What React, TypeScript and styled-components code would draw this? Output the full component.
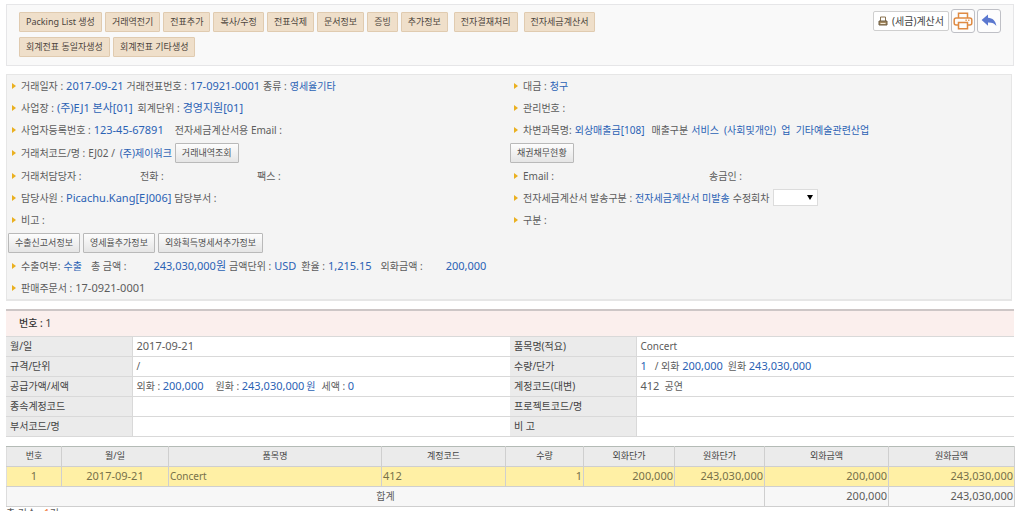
import React from "react";
import styled, { createGlobalStyle } from "styled-components";

const GlobalStyle = createGlobalStyle`
  * { box-sizing: border-box; }
  html, body { margin: 0; background: #fff; }
  body, button, select, input {
    font-family: "Noto Sans", "Noto Sans CJK KR", sans-serif;
    font-size: 10px;
    color: #5c5c5c;
  }
`;

const Page = styled.main`
  padding: 4px 9px 0 6px;
  height: 100vh;
  overflow: hidden;
`;

const Toolbar = styled.header`
  display: flex;
  justify-content: space-between;
  align-items: flex-start;
  gap: 24px;
  padding: 7px 12px 8px;
  background: #f9f9f9;
  border: 1px solid #e6e6e8;
`;

const Actions = styled.div`
  display: flex;
  flex-direction: column;
  gap: 5px;
`;

const ActionLine = styled.div`
  display: flex;
  flex-wrap: wrap;
  gap: 3px;
`;

const ActionButton = styled.button<{ $apart?: boolean }>`
  height: 20px;
  padding: 0 6px;
  margin-left: ${(p) => (p.$apart ? 3 : 0)}px;
  border: 1px solid #e0cbb0;
  border-radius: 1px;
  background: #efdfca;
  color: #4c443c;
  font-size: 9px;
  line-height: 16px;
  white-space: nowrap;
`;

const Tools = styled.div`
  display: flex;
  align-items: center;
  gap: 2px;
  margin-top: -3px;
`;

const InvoiceButton = styled.button`
  display: flex;
  align-items: center;
  gap: 4px;
  height: 20px;
  padding: 0 4px;
  border: 1px solid #cfcfcf;
  border-radius: 2px;
  background: #fff;
  color: #444;
  line-height: 16px;
  white-space: nowrap;
`;

const IconButton = styled.button`
  display: grid;
  place-items: center;
  width: 24px;
  height: 24px;
  padding: 0;
  border: 1px solid #bfc0c6;
  border-radius: 3px;
  background: #fdfdfd;
`;

const Info = styled.section`
  margin: 8px 2px 0 0;
  background: #f4f4f4;
  border: 1px solid #e6e6e6;
  border-bottom-width: 2px;
`;

const InfoRow = styled.div<{ $tall?: boolean }>`
  display: grid;
  grid-template-columns: 1fr 1fr;
  height: ${(p) => (p.$tall ? 24 : 22)}px;
`;

const Cell = styled.div<{ $buttons?: boolean }>`
  display: flex;
  align-items: center;
  gap: 3px;
  padding: 0 0 1px ${(p) => (p.$buttons ? 1 : 5)}px;
  white-space: pre;
  line-height: 16px;
`;

const Bullet = styled.span`
  width: 0;
  height: 0;
  margin-right: 2px;
  border: solid transparent;
  border-width: 3px 0 3px 4px;
  border-left-color: #eab020;
`;

const Slot = styled.span<{ $width: number }>`
  width: ${(p) => p.$width}px;
`;

const Value = styled.span<{ $num?: boolean; $after?: number; $before?: number }>`
  color: #2b62b4;
  font-size: ${(p) => (p.$num ? 11 : 10)}px;
  margin-right: ${(p) => p.$after ?? 0}px;
  margin-left: ${(p) => p.$before ?? 0}px;
`;

const Plain = styled.span`
  font-size: 11px;
`;

const GrayButton = styled.button`
  height: 20px;
  padding: 0 6px;
  border: 1px solid #b9b9b9;
  border-radius: 1px;
  background: linear-gradient(#fdfdfd, #e5e5e5);
  color: #4e4e4e;
  font-size: 9px;
  line-height: 16px;
  white-space: nowrap;
`;

const SelectBox = styled.span`
  position: relative;
  display: block;
  &::after {
    content: "";
    position: absolute;
    top: 6px;
    right: 5px;
    border: solid transparent;
    border-width: 5px 3px 0;
    border-top-color: #000;
    pointer-events: none;
  }
`;

const Select = styled.select`
  display: block;
  appearance: none;
  width: 45px;
  height: 17px;
  border: 1px solid #dcdcdc;
  border-radius: 0;
  background: #fff;
`;

const ItemTitle = styled.h2`
  margin: 8px 0 0;
  height: 27px;
  padding-left: 13px;
  border-top: 2px solid #cdc6c6;
  background: #fbefed;
  font-size: 10px;
  font-weight: 500;
  line-height: 24px;
  color: #333;
`;

const Count = styled.span`
  font-size: 11px;
  font-weight: 400;
  color: #444;
`;

const Table = styled.table`
  width: 100%;
  table-layout: fixed;
  border-collapse: collapse;
  line-height: 16px;
`;

const Detail = styled(Table)`
  th, td {
    height: 20px;
    padding: 0 4px 1px;
    border-top: 1px solid #d9d9d9;
    border-bottom: 1px solid #d9d9d9;
    text-align: left;
    white-space: pre;
  }
  th {
    background: #ebebeb;
    border-right: 1px solid #d9d9d9;
    color: #444;
    font-weight: 400;
  }
`;

const List = styled(Table)`
  margin-top: 9px;
  border-top: 1px solid #b4bbb6;
  th, td {
    height: 20px;
    padding: 0 1px 1px;
    border: 1px solid #cfcfcf;
    white-space: nowrap;
  }
  th {
    background: #ebebeb;
    color: #444;
    font-size: 9px;
    font-weight: 400;
    border-top-color: #b4bbb6;
  }
  th:first-child, td:first-child { border-left-color: #ddd; }
`;

const ListCell = styled.td<{ $align?: string; $text?: boolean }>`
  text-align: ${(p) => p.$align ?? "right"};
  font-size: ${(p) => (p.$text ? 10 : 11)}px;
`;

const Picked = styled.tr`
  background: #fff0a5;
  color: #77704a;
`;

const Total = styled.tr`
  background: #f7f7f7;
`;

const Footer = styled.p`
  margin: 0;
  line-height: 12px;
  b { color: #f07030; font-weight: 400; }
`;

const SmallPrinter = () => (
  <svg width="10" height="10" viewBox="0 0 10 10" aria-hidden="true">
    <path d="M2.5 5V1h5v4" fill="#fff" stroke="#8a7350" />
    <path d="M1 5h8v4H1z" fill="#a58a60" stroke="#6b5a40" />
    <path d="M2.5 7.5h5" stroke="#f4ead8" />
  </svg>
);

const Printer = () => (
  <svg width="20" height="18" viewBox="0 0 20 18" fill="none" stroke="#df8a42" strokeWidth="1.5" aria-hidden="true">
    <path d="M5.5 6V1.2h9V6" />
    <path d="M5.5 13H3.2Q1.2 13 1.2 11V8Q1.2 6 3.2 6h13.6Q18.800 6 18.800 8v3Q18.800 13 16.800 13H14.500" />
    <path d="M5.500 10.500h9v6.200h-9z" />
    <path d="M12.500 8.300h1.200M15.200 8.300h1.200" />
  </svg>
);

const Back = () => (
  <svg width="16" height="14" viewBox="0 0 16 14" aria-hidden="true">
    <path d="M7 .5v3.300c4.600.2 7.700 3.200 8.400 8.200C13.600 9.300 11 8.300 7 8.400v3.400L.6 6z" fill="#5b78cf" />
  </svg>
);

const actions = ["Packing List 생성", "거래역전기", "전표추가", "복사/수정", "전표삭제", "문서정보", "증빙", "추가정보"];
const columns: [string, number][] = [
  ["번호", 55], ["월/일", 107], ["품목명", 213], ["계정코드", 124], ["수량", 78],
  ["외화단가", 91], ["원화단가", 90], ["외화금액", 124], ["원화금액", 126],
];

export default function App() {
  return (
    <Page>
      <GlobalStyle />
      <Toolbar>
        <Actions>
          <ActionLine>
            {actions.map((a) => <ActionButton key={a}>{a}</ActionButton>)}
            <ActionButton $apart>전자결재처리</ActionButton>
            <ActionButton $apart>전자세금계산서</ActionButton>
          </ActionLine>
          <ActionLine>
            <ActionButton>회계전표 동일자생성</ActionButton>
            <ActionButton>회계전표 기타생성</ActionButton>
          </ActionLine>
        </Actions>
        <Tools>
          <InvoiceButton><SmallPrinter />(세금)계산서</InvoiceButton>
          <IconButton aria-label="인쇄"><Printer /></IconButton>
          <IconButton aria-label="뒤로"><Back /></IconButton>
        </Tools>
      </Toolbar>

      <Info>
        <InfoRow>
          <Cell>
            <Bullet />거래일자 :<Value $num>2017-09-21</Value>
            거래전표번호 :<Value $num>17-0921-0001</Value>
            종류 :<Value>영세율기타</Value>
          </Cell>
          <Cell><Bullet />대금 :<Value>청구</Value></Cell>
        </InfoRow>
        <InfoRow>
          <Cell>
            <Bullet />사업장 :<Value $num $after={2}>(주)EJ1 본사[01]</Value>
            회계단위 :<Value $num>경영지원[01]</Value>
          </Cell>
          <Cell><Bullet />관리번호 :</Cell>
        </InfoRow>
        <InfoRow>
          <Cell>
            <Bullet />사업자등록번호 :<Value $num $after={8}>123-45-67891</Value>
            전자세금계산서용 Email :
          </Cell>
          <Cell>
            <Bullet />차변과목명:<Value $after={4}>외상매출금[108]</Value>
            매출구분<Value>{"서비스  (사회및개인)  업  기타예술관련산업"}</Value>
          </Cell>
        </InfoRow>
        <InfoRow $tall>
          <Cell>
            <Bullet />거래처코드/명 :<span>EJ02 /</span><Value $before={2}>(주)제이워크</Value>
            <GrayButton>거래내역조회</GrayButton>
          </Cell>
          <Cell $buttons><GrayButton>채권채무현황</GrayButton></Cell>
        </InfoRow>
        <InfoRow>
          <Cell>
            <Bullet /><Slot $width={116}>거래처담당자 :</Slot>
            <Slot $width={114}>전화 :</Slot>팩스 :
          </Cell>
          <Cell><Bullet /><Slot $width={183}>Email :</Slot>송금인 :</Cell>
        </InfoRow>
        <InfoRow>
          <Cell>
            <Bullet />담당사원 :<Value $num>Picachu.Kang[EJ006]</Value>담당부서 :
          </Cell>
          <Cell>
            <Bullet />전자세금계산서 발송구분 :<Value>전자세금계산서 미발송</Value>
            <label htmlFor="revision">수정회차</label>
            <SelectBox><Select id="revision" /></SelectBox>
          </Cell>
        </InfoRow>
        <InfoRow>
          <Cell><Bullet />비고 :</Cell>
          <Cell><Bullet />구분 :</Cell>
        </InfoRow>
        <InfoRow $tall>
          <Cell $buttons>
            <GrayButton>수출신고서정보</GrayButton>
            <GrayButton>영세율추가정보</GrayButton>
            <GrayButton>외화획득명세서추가정보</GrayButton>
          </Cell>
        </InfoRow>
        <InfoRow>
          <Cell>
            <Bullet />수출여부:<Value $after={6}>수출</Value>
            총 금액 :<Value $num $before={24}>243,030,000원</Value>
            금액단위 :<Value $num $after={2}>USD</Value>
            환율 :<Value $num $after={6}>1,215.15</Value>
            외화금액 :<Value $num $before={20}>200,000</Value>
          </Cell>
        </InfoRow>
        <InfoRow>
          <Cell><Bullet />판매주문서 :<Plain>17-0921-0001</Plain></Cell>
        </InfoRow>
      </Info>

      <ItemTitle>번호 : <Count>1</Count></ItemTitle>
      <Detail>
        <colgroup>
          <col width="126" /><col width="378" /><col width="126" /><col width="378" />
        </colgroup>
        <tbody>
          <tr>
            <th scope="row">월/일</th><td><Plain>2017-09-21</Plain></td>
            <th scope="row">품목명(적요)</th><td>Concert</td>
          </tr>
          <tr>
            <th scope="row">규격/단위</th><td>/</td>
            <th scope="row">수량/단가</th>
            <td>
              <Value $num $after={8}>1</Value>/ 외화 <Value $num $after={5}>200,000</Value>원화 <Value $num>243,030,000</Value>
            </td>
          </tr>
          <tr>
            <th scope="row">공급가액/세액</th>
            <td>
              외화 : <Value $num $after={12}>200,000</Value>원화 : <Value $num $after={2}>243,030,000</Value>
              <Value $after={6}>원</Value>세액 : <Value $num>0</Value>
            </td>
            <th scope="row">계정코드(대변)</th><td><Plain>412</Plain>{"  공연"}</td>
          </tr>
          <tr>
            <th scope="row">종속계정코드</th><td />
            <th scope="row">프로젝트코드/명</th><td />
          </tr>
          <tr>
            <th scope="row">부서코드/명</th><td />
            <th scope="row">비 고</th><td />
          </tr>
        </tbody>
      </Detail>

      <List>
        <colgroup>{columns.map(([name, w]) => <col key={name} width={w} />)}</colgroup>
        <thead>
          <tr>{columns.map(([name]) => <th key={name} scope="col">{name}</th>)}</tr>
        </thead>
        <tbody>
          <Picked>
            <ListCell $align="center">1</ListCell>
            <ListCell $align="center">2017-09-21</ListCell>
            <ListCell $align="left" $text>Concert</ListCell>
            <ListCell $align="left">412</ListCell>
            <ListCell>1</ListCell>
            <ListCell>200,000</ListCell>
            <ListCell>243,030,000</ListCell>
            <ListCell>200,000</ListCell>
            <ListCell>243,030,000</ListCell>
          </Picked>
          <Total>
            <ListCell colSpan={7} $align="center" $text>합계</ListCell>
            <ListCell>200,000</ListCell>
            <ListCell>243,030,000</ListCell>
          </Total>
        </tbody>
      </List>
      <Footer>총 건수 : <b>1</b>건</Footer>
    </Page>
  );
}
